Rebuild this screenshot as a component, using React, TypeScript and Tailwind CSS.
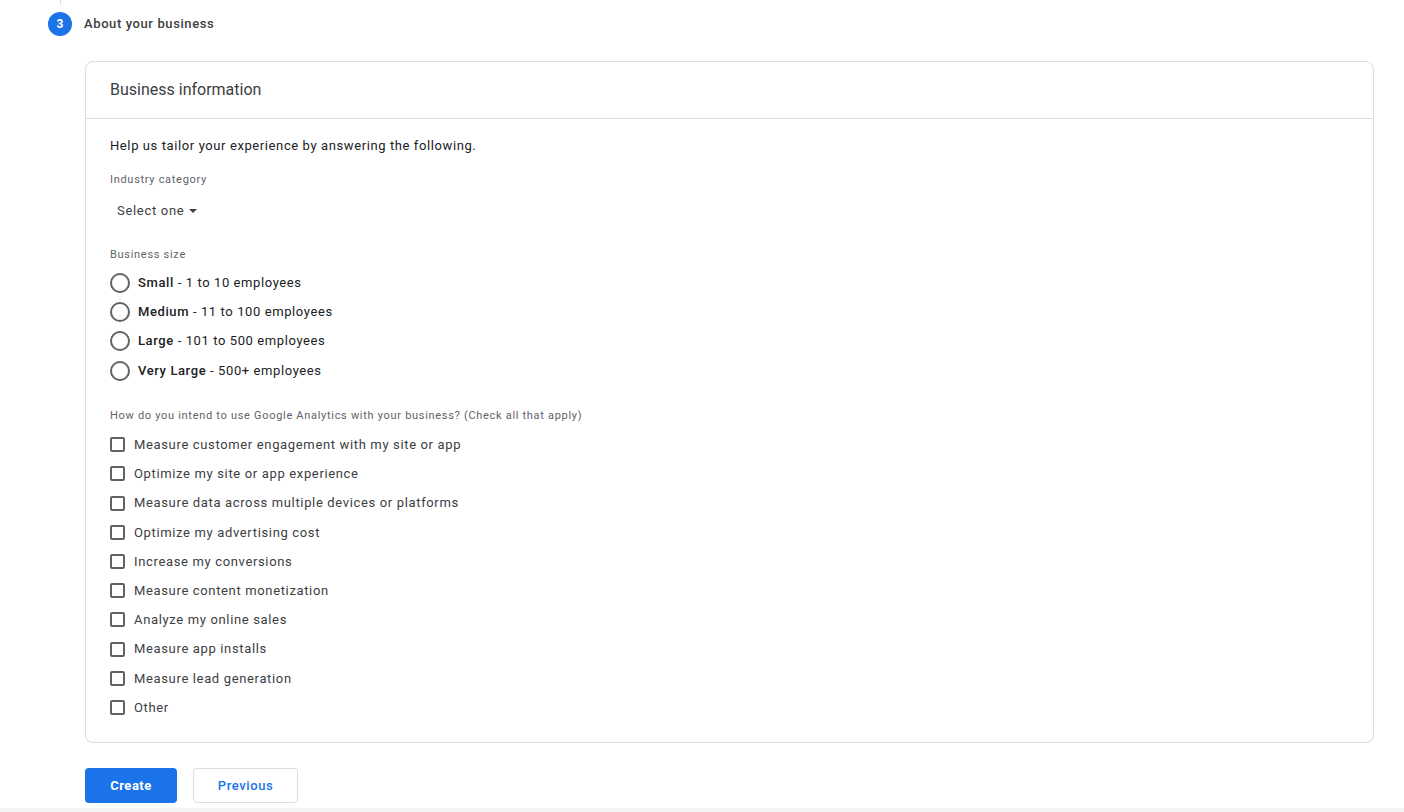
import React from "react";

const sizes: [string, string][] = [
  ["Small", " - 1 to 10 employees"],
  ["Medium", " - 11 to 100 employees"],
  ["Large", " - 101 to 500 employees"],
  ["Very Large", " - 500+ employees"],
];

const uses = [
  "Measure customer engagement with my site or app",
  "Optimize my site or app experience",
  "Measure data across multiple devices or platforms",
  "Optimize my advertising cost",
  "Increase my conversions",
  "Measure content monetization",
  "Analyze my online sales",
  "Measure app installs",
  "Measure lead generation",
  "Other",
];

export default function App() {
  return (
    <div className="w-[1404px] h-[812px] bg-white flex flex-col overflow-hidden font-['Roboto',sans-serif] text-[#202124]">
      <div className="pl-[48px]">
        <div className="ml-[12px] w-px h-[5px] bg-[#dadce0]" />
        <div className="mt-[7px] flex items-center h-[24px]">
          <div className="w-[24px] h-[24px] rounded-full bg-[#1a73e8] text-white text-[12px] font-bold flex items-center justify-center">
            3
          </div>
          <div className="ml-[12px] text-[13px] font-medium text-[#3c4043] tracking-[0.6px]">
            About your business
          </div>
        </div>

        <div className="mt-[25px] ml-[37px] w-[1289px] border border-[#dadce0] rounded-[8px]">
          <div className="h-[57px] border-b border-[#dadce0] px-[24px] flex items-center text-[16px] text-[#3c4043]">
            Business information
          </div>
          <div className="px-[24px] pt-[17px] pb-[20px]">
            <div className="h-[20px] flex items-center text-[13px] text-[#202124] tracking-[0.6px]">
              Help us tailor your experience by answering the following.
            </div>
            <div className="mt-[16px] h-[16px] flex items-center text-[11px] text-[#5f6368] tracking-[0.7px]">
              Industry category
            </div>
            <div className="mt-[13px] h-[20px] flex items-center pl-[7px] text-[13px] text-[#3c4043] tracking-[0.7px]">
              Select one
              <svg className="ml-[5px]" width="8" height="4" viewBox="0 0 8 4">
                <path d="M0 0 L8 0 L4 4 Z" fill="#3c4043" />
              </svg>
            </div>
            <div className="mt-[26px] h-[16px] flex items-center text-[11px] text-[#5f6368] tracking-[0.7px]">
              Business size
            </div>
            <div className="mt-[5px] flex flex-col">
              {sizes.map(([b, rest]) => (
                <div key={b} className="h-[29.3px] flex items-center">
                  <div className="w-[20px] h-[20px] rounded-full border-2 border-[#5f6368]" />
                  <span className="ml-[8px] text-[13px] text-[#202124] tracking-[0.6px]">
                    <span className="font-medium">{b}</span>
                    {rest}
                  </span>
                </div>
              ))}
            </div>
            <div className="mt-[23px] h-[16px] flex items-center text-[11px] text-[#5f6368] tracking-[0.7px]">
              How do you intend to use Google Analytics with your business? (Check all that apply)
            </div>
            <div className="mt-[6px] flex flex-col">
              {uses.map((u) => (
                <div key={u} className="h-[29.2px] flex items-center">
                  <div className="w-[15px] h-[15px] rounded-[2px] border-2 border-[#5f6368]" />
                  <span className="ml-[9px] text-[13px] text-[#3c4043] tracking-[0.65px]">{u}</span>
                </div>
              ))}
            </div>
          </div>
        </div>

        <div className="mt-[25px] ml-[37px] flex items-center">
          <button className="w-[92px] h-[35px] rounded-[4px] bg-[#1a73e8] text-white text-[13px] font-bold tracking-[0.5px]">
            Create
          </button>
          <button className="ml-[16px] w-[105px] h-[35px] rounded-[4px] border border-[#dadce0] bg-white text-[#1a73e8] text-[13px] font-medium tracking-[0.6px]">
            Previous
          </button>
        </div>
      </div>
      <div className="flex-1" />
      <div className="h-[4px] bg-[#f1f3f4]" />
    </div>
  );
}
